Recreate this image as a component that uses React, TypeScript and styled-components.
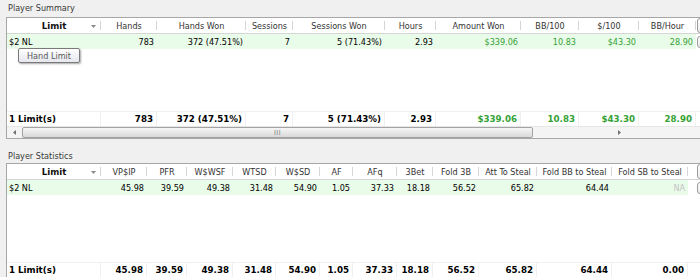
import React from 'react';
import styled, { createGlobalStyle } from 'styled-components';

const Global = createGlobalStyle`
  html, body { margin: 0; padding: 0; background: #f0f0f0; }
  body {
    width: 700px; height: 277px; overflow: hidden;
    font-family: "DejaVu Sans Condensed", "Liberation Sans", sans-serif;
    font-size: 9px; color: #000;
  }
`;

const Page = styled.div`
  width: 700px; height: 277px; overflow: hidden;
  display: flex; flex-direction: column;
  padding-left: 6px; box-sizing: border-box;
`;

const SectionLabel = styled.div<{ $h: number; $pb: number }>`
  height: ${p => p.$h}px; flex: none;
  display: flex; align-items: flex-end;
  padding: 0 0 ${p => p.$pb}px 2px; box-sizing: border-box;
  color: #3a3a3a; font-size: 9px; line-height: 11px;
`;

const Panel = styled.div<{ $h: number }>`
  position: relative; flex: none;
  width: 700px; height: ${p => p.$h}px;
  background: #fff;
  border: 1px solid #a7a7a7; border-right: none;
  box-sizing: border-box;
  display: flex; flex-direction: column;
`;

const Row = styled.div<{ $cols: string; $h: number; $line?: string; $top?: string }>`
  flex: none;
  display: grid; grid-template-columns: ${p => p.$cols};
  height: ${p => p.$h}px; box-sizing: border-box;
  border-bottom: ${p => (p.$line ? `1px solid ${p.$line}` : 'none')};
  border-top: ${p => (p.$top ? `1px solid ${p.$top}` : 'none')};
`;

const Filler = styled.div`
  flex: 1;
`;

const HeaderCell = styled.div<{ $bold?: boolean }>`
  position: relative;
  display: flex; align-items: center; justify-content: center;
  white-space: nowrap; overflow: hidden;
  color: ${p => (p.$bold ? '#111' : '#333')};
  font-family: ${p => (p.$bold ? '"DejaVu Sans", "Liberation Sans", sans-serif' : 'inherit')};
  font-weight: ${p => (p.$bold ? 700 : 400)};
  font-size: ${p => (p.$bold ? '8.7px' : '9px')};
  &::after {
    content: ''; position: absolute; right: 0; top: 3px; bottom: 3px;
    width: 1px; background: #d6d6d6;
  }
`;

const SortArrow = styled.svg`
  position: absolute; right: 5px; top: 7px;
`;

const Cell = styled.div<{ $left?: boolean; $bg?: string; $color?: string; $bold?: boolean; $sep?: boolean }>`
  display: flex; align-items: center;
  justify-content: ${p => (p.$left ? 'flex-start' : 'flex-end')};
  padding: ${p => (p.$left ? '0 0 0 2px' : '0 3px 0 0')};
  white-space: nowrap; overflow: hidden;
  background: ${p => p.$bg || 'transparent'};
  color: ${p => p.$color || '#000'};
  font-family: ${p => (p.$bold ? '"DejaVu Sans", "Liberation Sans", sans-serif' : 'inherit')};
  font-weight: ${p => (p.$bold ? 700 : 400)};
  font-size: ${p => (p.$bold ? '8.7px' : '9px')};
  border-right: ${p => (p.$sep ? '1px solid #f0f0f0' : 'none')};
`;

const ExtraCell = styled.div<{ $offset: number }>`
  display: flex; align-items: center;
  padding-left: ${p => p.$offset}px;
  overflow: visible;
`;

const ChooserBox = styled.div<{ $h: number }>`
  flex: none; width: 14px; height: ${p => p.$h}px;
  border: 1px solid #9c9c9c; border-radius: 3px;
  background: linear-gradient(#fdfdfd, #ececec);
  box-sizing: border-box;
`;

const Tooltip = styled.div`
  position: absolute; left: 11px; top: 30px;
  width: 62px; height: 15px; box-sizing: border-box;
  border: 1px solid #7a7a7a; border-radius: 2px;
  background: linear-gradient(#ffffff, #e6e7ef);
  box-shadow: 1px 1px 2px rgba(0, 0, 0, 0.35);
  display: flex; align-items: center; justify-content: center;
  color: #5a5a5a; font-size: 9px;
`;

const HScroll = styled.div`
  flex: none; height: 12px;
  display: flex; align-items: stretch;
  background: #f4f4f4;
  border-top: 1px solid #e6e6e6;
  box-sizing: border-box;
`;

const ScrollBtn = styled.div`
  flex: none; width: 15px;
  display: flex; align-items: center; justify-content: center;
`;

const Thumb = styled.div<{ $w: number }>`
  flex: none; width: ${p => p.$w}px;
  border: 1px solid #a3a3a3; border-radius: 2px;
  background: linear-gradient(#f6f6f6, #d9d9d9);
  box-sizing: border-box;
  display: flex; align-items: center; justify-content: center;
  color: #777; font-size: 7px; letter-spacing: 0.5px;
`;

const Track = styled.div`
  flex: 1;
`;

type Col = { label: string; w: number };

const summaryCols: Col[] = [
  { label: 'Limit', w: 94 },
  { label: 'Hands', w: 56 },
  { label: 'Hands Won', w: 89 },
  { label: 'Sessions', w: 47 },
  { label: 'Sessions Won', w: 92 },
  { label: 'Hours', w: 51 },
  { label: 'Amount Won', w: 85 },
  { label: 'BB/100', w: 58 },
  { label: '$/100', w: 60 },
  { label: 'BB/Hour', w: 57 },
];

const statsCols: Col[] = [
  { label: 'Limit', w: 94 },
  { label: 'VP$IP', w: 46 },
  { label: 'PFR', w: 40 },
  { label: 'W$WSF', w: 46 },
  { label: 'WTSD', w: 43 },
  { label: 'W$SD', w: 44 },
  { label: 'AF', w: 33 },
  { label: 'AFq', w: 44 },
  { label: '3Bet', w: 36 },
  { label: 'Fold 3B', w: 46 },
  { label: 'Att To Steal', w: 58 },
  { label: 'Fold BB to Steal', w: 75 },
  { label: 'Fold SB to Steal', w: 76 },
];

type V = { t: string; c?: string };
const G = '#35a235';
const ROW_BG = '#e9fbe9';

const summaryRow: V[] = [
  { t: '$2 NL' }, { t: '783' }, { t: '372 (47.51%)' }, { t: '7' }, { t: '5 (71.43%)' },
  { t: '2.93' }, { t: '$339.06', c: G }, { t: '10.83', c: G }, { t: '$43.30', c: G }, { t: '28.90', c: G },
];
const summaryTotal: V[] = [
  { t: '1 Limit(s)' }, { t: '783' }, { t: '372 (47.51%)' }, { t: '7' }, { t: '5 (71.43%)' },
  { t: '2.93' }, { t: '$339.06', c: G }, { t: '10.83', c: G }, { t: '$43.30', c: G }, { t: '28.90', c: G },
];
const statsRow: V[] = [
  { t: '$2 NL' }, { t: '45.98' }, { t: '39.59' }, { t: '49.38' }, { t: '31.48' }, { t: '54.90' },
  { t: '1.05' }, { t: '37.33' }, { t: '18.18' }, { t: '56.52' }, { t: '65.82' }, { t: '64.44' },
  { t: 'NA', c: '#c4c4c4' },
];
const statsTotal: V[] = [
  { t: '1 Limit(s)' }, { t: '45.98' }, { t: '39.59' }, { t: '49.38' }, { t: '31.48' }, { t: '54.90' },
  { t: '1.05' }, { t: '37.33' }, { t: '18.18' }, { t: '56.52' }, { t: '65.82' }, { t: '64.44' },
  { t: '0.00' },
];

const template = (cols: Col[]) => cols.map(c => `${c.w}px`).join(' ') + ' 1fr';

const Header: React.FC<{ cols: Col[]; offset: number }> = ({ cols, offset }) => (
  <Row $cols={template(cols)} $h={16} $line="#d5d5d5">
    {cols.map((c, i) => (
      <HeaderCell key={c.label} $bold={i === 0}>
        {c.label}
        {i === 0 && (
          <SortArrow width="5" height="3" viewBox="0 0 5 3">
            <path d="M0 0 L2.5 3 L5 0 Z" fill="#8a8a8a" />
          </SortArrow>
        )}
      </HeaderCell>
    ))}
    <ExtraCell $offset={offset}>
      <ChooserBox $h={15} />
    </ExtraCell>
  </Row>
);

const DataRow: React.FC<{ cols: Col[]; values: V[]; offset: number }> = ({ cols, values, offset }) => (
  <Row $cols={template(cols)} $h={15}>
    {values.map((v, i) => (
      <Cell key={i} $left={i === 0} $bg={ROW_BG} $color={v.c}>
        {v.t}
      </Cell>
    ))}
    <ExtraCell $offset={offset}>
      <ChooserBox $h={12} />
    </ExtraCell>
  </Row>
);

const TotalRow: React.FC<{ cols: Col[]; values: V[] }> = ({ cols, values }) => (
  <Row $cols={template(cols)} $h={15} $top="#f1f1f1">
    {values.map((v, i) => (
      <Cell key={i} $left={i === 0} $color={v.c} $bold $sep>
        {v.t}
      </Cell>
    ))}
    <div />
  </Row>
);

const Arrow: React.FC<{ dir: 'left' | 'right' }> = ({ dir }) => (
  <svg width="3" height="5" viewBox="0 0 3 5">
    <path d={dir === 'left' ? 'M3 0 L0 2.5 L3 5 Z' : 'M0 0 L3 2.5 L0 5 Z'} fill="#707070" />
  </svg>
);

export default function App() {
  return (
    <>
      <Global />
      <Page>
        <SectionLabel $h={17} $pb={3}>Player Summary</SectionLabel>
        <Panel $h={122}>
          <Header cols={summaryCols} offset={1} />
          <DataRow cols={summaryCols} values={summaryRow} offset={1} />
          <Filler />
          <TotalRow cols={summaryCols} values={summaryTotal} />
          <HScroll>
            <ScrollBtn><Arrow dir="left" /></ScrollBtn>
            <Thumb $w={511}>III</Thumb>
            <Track />
            <ScrollBtn><Arrow dir="right" /></ScrollBtn>
            <Track />
          </HScroll>
          <Tooltip>Hand Limit</Tooltip>
        </Panel>
        <SectionLabel $h={24} $pb={1}>Player Statistics</SectionLabel>
        <Panel $h={115}>
          <Header cols={statsCols} offset={9} />
          <DataRow cols={statsCols} values={statsRow} offset={9} />
          <Filler />
          <TotalRow cols={statsCols} values={statsTotal} />
        </Panel>
      </Page>
    </>
  );
}
